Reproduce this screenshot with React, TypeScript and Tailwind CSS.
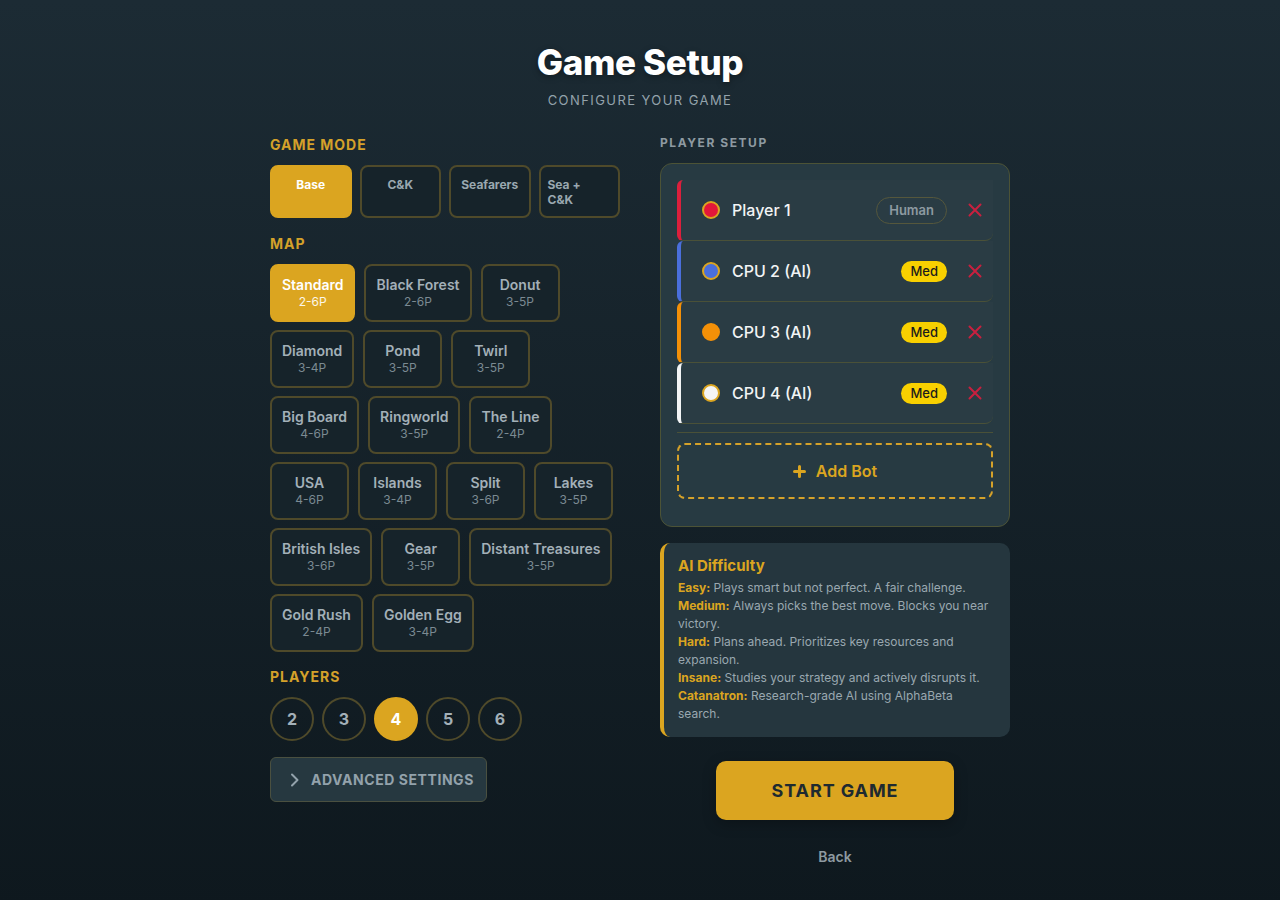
import { useState } from 'react';

const modes = [
  { key: 'base', label: 'Base' },
  { key: 'ck', label: 'C&K' },
  { key: 'sea', label: 'Seafarers' },
  { key: 'seack', label: 'Sea +\nC&K' },
];

const maps = [
  { name: 'Standard', range: '2-6P' },
  { name: 'Black Forest', range: '2-6P' },
  { name: 'Donut', range: '3-5P' },
  { name: 'Diamond', range: '3-4P' },
  { name: 'Pond', range: '3-5P' },
  { name: 'Twirl', range: '3-5P' },
  { name: 'Big Board', range: '4-6P' },
  { name: 'Ringworld', range: '3-5P' },
  { name: 'The Line', range: '2-4P' },
  { name: 'USA', range: '4-6P' },
  { name: 'Islands', range: '3-4P' },
  { name: 'Split', range: '3-6P' },
  { name: 'Lakes', range: '3-5P' },
  { name: 'British Isles', range: '3-6P' },
  { name: 'Gear', range: '3-5P' },
  { name: 'Distant Treasures', range: '3-5P' },
  { name: 'Gold Rush', range: '2-4P' },
  { name: 'Golden Egg', range: '3-4P' },
];

// row layout for the map picker (widths follow the labels)
const mapRows = [[0, 1, 2], [3, 4, 5], [6, 7, 8], [9, 10, 11, 12], [13, 14, 15], [16, 17]];

const players = [
  { name: 'Player 1', human: true, bar: 'border-l-[#dc1f3c]', dot: 'bg-[#e3173a] border-[#dba520]' },
  { name: 'CPU 2 (AI)', human: false, bar: 'border-l-[#4a6fdc]', dot: 'bg-[#4a6fdc] border-[#dba520]' },
  { name: 'CPU 3 (AI)', human: false, bar: 'border-l-[#f39008]', dot: 'bg-[#f39008] border-[#f39008]' },
  { name: 'CPU 4 (AI)', human: false, bar: 'border-l-[#f2f4f5]', dot: 'bg-[#f5f5f5] border-[#dba520]' },
];

const difficulty = [
  { label: 'Easy:', text: 'Plays smart but not perfect. A fair challenge.' },
  { label: 'Medium:', text: 'Always picks the best move. Blocks you near victory.' },
  { label: 'Hard:', text: 'Plans ahead. Prioritizes key resources and expansion.' },
  { label: 'Insane:', text: 'Studies your strategy and actively disrupts it.' },
  { label: 'Catanatron:', text: 'Research-grade AI using AlphaBeta search.' },
];

function CloseIcon() {
  return (
    <svg width="14" height="14" viewBox="0 0 14 14" fill="none" stroke="#c8203f" strokeWidth={2} strokeLinecap="round">
      <path d="M1.5 1.5l11 11M12.5 1.5l-11 11" />
    </svg>
  );
}

export default function App() {
  const [mode, setMode] = useState('base');
  const [map, setMap] = useState(0);
  const [count, setCount] = useState(4);

  return (
    <div className="min-h-[900px] bg-gradient-to-b from-[#1c2b34] to-[#0e181e] pt-[40px] pb-10" style={{ fontFamily: 'Inter, "Noto Sans", sans-serif' }}>
      <header className="text-center">
        <h1 className="text-[35px] leading-[44px] font-extrabold text-white tracking-[-0.01em] [text-shadow:0_2px_6px_rgba(0,0,0,0.35)]">Game Setup</h1>
        <p className="mt-[6px] text-[13px] leading-5 tracking-[0.11em] text-[#93a2ab]">CONFIGURE YOUR GAME</p>
      </header>

      <div className="mx-auto mt-[26px] grid w-[740px] grid-cols-2 gap-10">
        {/* left column: mode, map, players */}
        <div>
          <h2 className="mb-[11px] text-[14px] leading-[18px] font-bold tracking-[0.07em] text-[#d4a12a]">GAME MODE</h2>
          <div className="grid grid-cols-4 gap-[8px]">
            {modes.map((m) => (
              <button
                key={m.key}
                onClick={() => setMode(m.key)}
                className={
                  'flex h-[53px] justify-center rounded-lg border-2 px-[7px] pt-[10px] text-[12px] leading-[15px] font-bold ' +
                  (mode === m.key ? 'border-[#dba520] bg-[#dba520] text-white' : 'border-[#4f4a2a] bg-[#16232a] text-[#9aa8b0]')
                }
              >
                <span className={m.label.includes('\n') ? 'w-full whitespace-pre-line text-left' : ''}>{m.label}</span>
              </button>
            ))}
          </div>

          <h2 className="mt-[17px] mb-[11px] text-[14px] leading-[18px] font-bold tracking-[0.07em] text-[#d4a12a]">MAP</h2>
          <div className="flex flex-col gap-2">
            {mapRows.map((row, i) => (
              <div key={i} className="flex gap-[9px]">
                {row.map((idx) => {
                  const m = maps[idx];
                  const on = map === idx;
                  return (
                    <button
                      key={m.name}
                      onClick={() => setMap(idx)}
                      className={
                        'flex h-[58px] min-w-[79px] flex-col items-center justify-center rounded-lg border-2 px-[10px] ' +
                        (on ? 'border-[#dba520] bg-[#dba520]' : 'border-[#4f4a2a] bg-[#16232a]')
                      }
                    >
                      <span className={'text-[14px] leading-[18px] font-semibold ' + (on ? 'text-white' : 'text-[#a3b0b8]')}>{m.name}</span>
                      <span className={'text-[12px] leading-4 ' + (on ? 'text-white/90' : 'text-[#7b8a92]')}>{m.range}</span>
                    </button>
                  );
                })}
              </div>
            ))}
          </div>

          <h2 className="mt-[16px] mb-[11px] text-[14px] leading-[18px] font-bold tracking-[0.07em] text-[#d4a12a]">PLAYERS</h2>
          <div className="flex gap-2">
            {[2, 3, 4, 5, 6].map((n) => (
              <button
                key={n}
                onClick={() => setCount(n)}
                className={
                  'flex h-11 w-11 items-center justify-center rounded-full border-2 text-[16px] font-bold ' +
                  (count === n ? 'border-[#dba520] bg-[#dba520] text-white' : 'border-[#4f4a2a] bg-transparent text-[#a3b0b8]')
                }
              >
                {n}
              </button>
            ))}
          </div>

          <button className="mt-4 flex h-[45px] items-center gap-[12px] rounded-md border border-[#4a5040] bg-[#263840] pl-[19px] pr-[12px] text-[14px] font-bold tracking-[0.04em] text-[#93a2ab]">
            <svg width="9" height="14" viewBox="0 0 9 14" fill="none" stroke="#93a2ab" strokeWidth={2} strokeLinecap="round" strokeLinejoin="round">
              <path d="M2 1.5l5.5 5.5L2 12.5" />
            </svg>
            ADVANCED SETTINGS
          </button>
        </div>

        {/* right column: players, difficulty info, actions */}
        <div>
          <h2 className="mb-[13px] text-[12px] leading-[14px] font-bold tracking-[0.13em] text-[#8e9aa1]">PLAYER SETUP</h2>
          <div className="rounded-xl border border-[#4c5336] bg-[#273a42] px-4 pt-4 pb-[27px]">
            <div className="flex flex-col">
              {players.map((p) => (
                <div
                  key={p.name}
                  className={'flex h-[61px] items-center rounded-l-md rounded-br-lg border-b border-l-4 border-b-[#4a5138] bg-[#2a3c44] pl-[21px] pr-[2px] ' + p.bar}
                >
                  <span className={'h-[18px] w-[18px] rounded-full border-2 ' + p.dot} />
                  <span className="ml-3 flex-1 text-[16px] font-medium text-[#f2f4f5]">{p.name}</span>
                  {p.human ? (
                    <span className="rounded-full border border-[#55573c] px-[12px] py-[4px] text-[13px] leading-[17px] font-semibold text-[#8e9aa1]">Human</span>
                  ) : (
                    <span className="rounded-full bg-[#f8d000] px-[9px] py-[2px] text-[13px] leading-[17px] font-medium text-[#1c1c1c]">Med</span>
                  )}
                  <button className="ml-3 flex h-8 w-8 items-center justify-center">
                    <CloseIcon />
                  </button>
                </div>
              ))}
            </div>
            <div className="mt-2 h-px bg-[#4a5138]" />
            <button className="mt-[10px] flex h-[56px] w-full items-center justify-center gap-[10px] rounded-lg border-2 border-dashed border-[#d4a12a] text-[16px] font-semibold text-[#dba520]">
              <svg width="13" height="13" viewBox="0 0 13 13" fill="none" stroke="#dba520" strokeWidth={3} strokeLinecap="round">
                <path d="M6.5 1.5v10M1.5 6.5h10" />
              </svg>
              Add Bot
            </button>
          </div>

          <div className="mt-4 rounded-[10px] border-l-4 border-[#dba520] bg-[#25363e] pt-[13px] pb-[14px] pr-4 pl-[14px]">
            <h3 className="text-[15px] leading-5 font-bold text-[#dba520]">AI Difficulty</h3>
            <div className="mt-[3px] text-[12px] leading-[18px] text-[#9aa8b0]">
              {difficulty.map((d) => (
                <p key={d.label}>
                  <span className="font-bold text-[#dba520]">{d.label}</span> {d.text}
                </p>
              ))}
            </div>
          </div>

          <div className="mt-6 flex flex-col items-center">
            <button className="h-[59px] w-[238px] rounded-[10px] bg-[#dba520] text-[18px] font-bold tracking-[0.05em] text-[#1e2a30] shadow-[0_4px_14px_rgba(0,0,0,0.25)]">
              START GAME
            </button>
            <button className="mt-[26px] text-[14px] font-semibold text-[#8e9aa1]">Back</button>
          </div>
        </div>
      </div>
    </div>
  );
}
